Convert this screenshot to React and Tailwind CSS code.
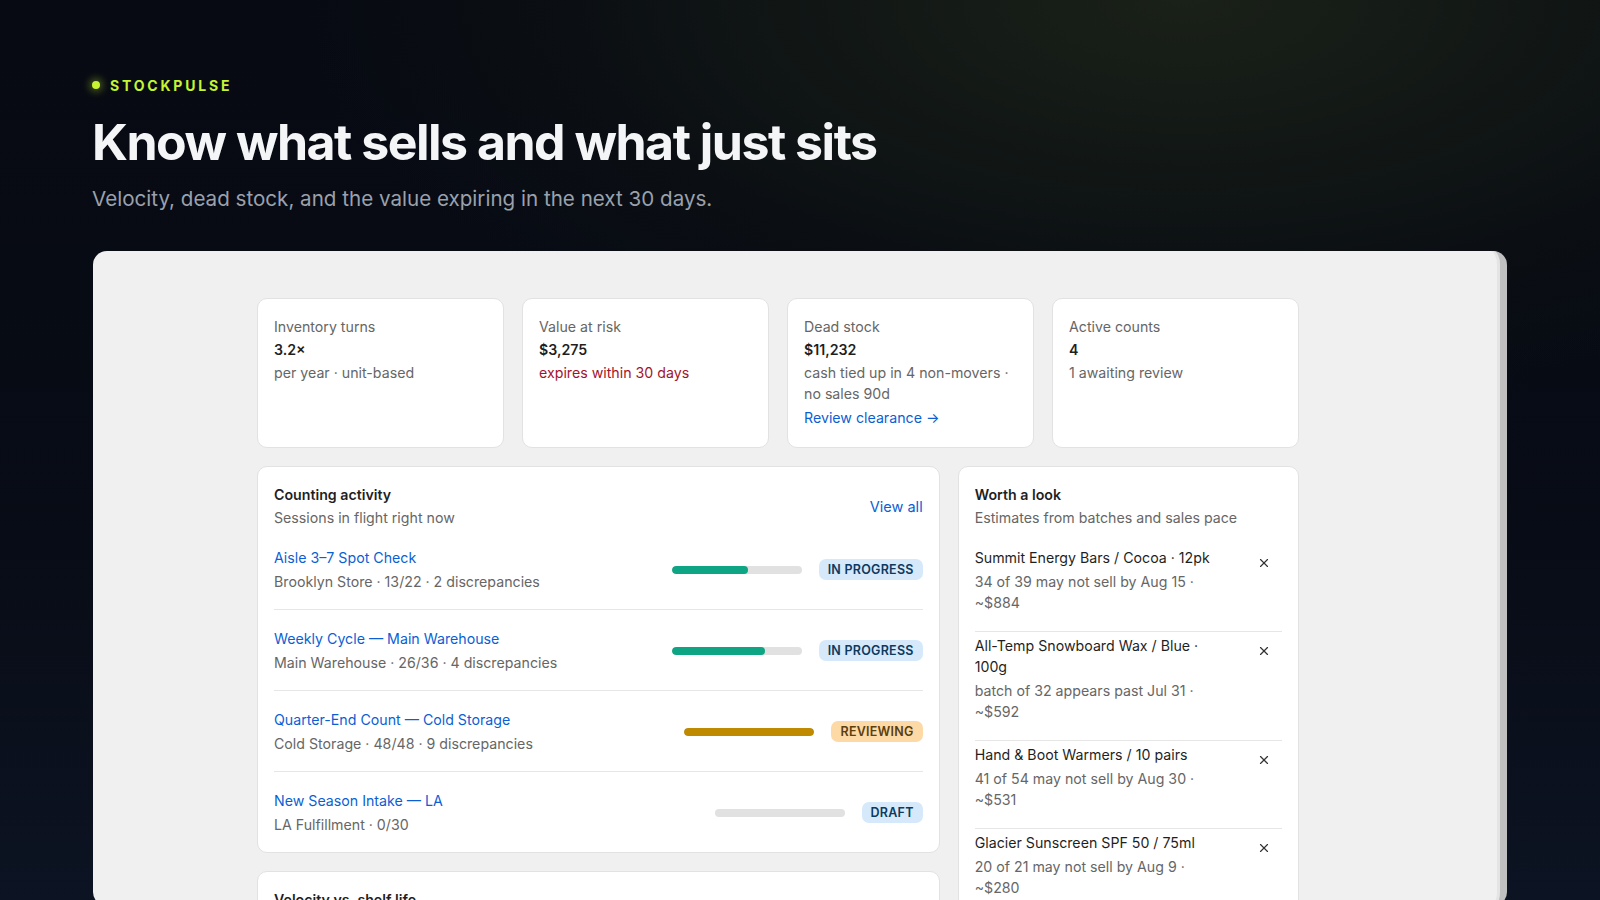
import React from "react";
import { X } from "lucide-react";

const stats = [
  { label: "Inventory turns", value: "3.2×", lines: ["per year · unit-based"] },
  { label: "Value at risk", value: "$3,275", lines: ["expires within 30 days"], danger: true },
  {
    label: "Dead stock",
    value: "$11,232",
    lines: ["cash tied up in 4 non-movers · no sales 90d"],
    link: "Review clearance →",
  },
  { label: "Active counts", value: "4", lines: ["1 awaiting review"] },
];

const sessions = [
  { name: "Aisle 3–7 Spot Check", meta: "Brooklyn Store · 13/22 · 2 discrepancies", pct: 59, status: "In progress" },
  { name: "Weekly Cycle — Main Warehouse", meta: "Main Warehouse · 26/36 · 4 discrepancies", pct: 72, status: "In progress" },
  { name: "Quarter-End Count — Cold Storage", meta: "Cold Storage · 48/48 · 9 discrepancies", pct: 100, status: "Reviewing" },
  { name: "New Season Intake — LA", meta: "LA Fulfillment · 0/30", pct: 0, status: "Draft" },
];

const looks = [
  { title: "Summit Energy Bars / Cocoa · 12pk", note: "34 of 39 may not sell by Aug 15 · ~$884" },
  { title: "All-Temp Snowboard Wax / Blue · 100g", note: "batch of 32 appears past Jul 31 · ~$592" },
  { title: "Hand & Boot Warmers / 10 pairs", note: "41 of 54 may not sell by Aug 30 · ~$531" },
  { title: "Glacier Sunscreen SPF 50 / 75ml", note: "20 of 21 may not sell by Aug 9 · ~$280" },
  { title: "Trail Mix Pouches / Salted · 6pk", note: "18 of 40 may not sell by Sep 2 · ~$144" },
];

const Badge = ({ status }) => {
  const tone =
    status === "Reviewing"
      ? "bg-[#fdd9a6] text-[#5a400f]"
      : "bg-[#d5e9fb] text-[#0d3a5e]";
  return (
    <span className={`h-[21px] px-[9px] flex items-center rounded-[7px] text-[12.5px] font-semibold uppercase tracking-[0.02em] ${tone}`}>
      {status}
    </span>
  );
};

const App = () => {
  return (
    <div
      className="h-screen overflow-hidden bg-[radial-gradient(ellipse_55%_45%_at_74%_0%,#1a2118_0%,#0b0f13_70%,transparent_100%),linear-gradient(180deg,#070a12_0%,#080c16_60%,#0c1322_100%)] px-[93px] pt-[75px]"
      style={{ fontFamily: "Inter, 'Noto Sans', sans-serif" }}
    >
      <div className="flex items-center gap-[10px] h-5 -ml-[1px]">
        <span className="w-2 h-2 rounded-full bg-[#c6f432] shadow-[0_0_8px_2px_rgba(198,244,50,0.45)]" />
        <span className="text-[14px] font-bold tracking-[0.2em] text-[#c6f432]">STOCKPULSE</span>
      </div>
      <h1 className="mt-[19px] text-[50px] leading-[57px] font-bold tracking-[-0.03em] text-[#f4f5f7] -ml-[1px]">
        Know what sells and what just sits
      </h1>
      <p className="mt-[14px] text-[20.6px] leading-[28px] text-[#9aa1ad] -ml-[1px]">
        Velocity, dead stock, and the value expiring in the next 30 days.
      </p>

      <div className="mt-[38px] w-[1414px] h-[655px] bg-[#f0f0f0] rounded-[14px] overflow-hidden border-r-[7px] border-r-[#c0c0c0] shadow-[inset_-3px_0_0_#e4e4e4]">
        <div className="pt-[47px] pl-[164px] pb-12 w-[1206px] text-[14.2px] leading-[21px] text-[#222]">
          <div className="grid grid-cols-4 gap-[18px]">
            {stats.map((s) => (
              <div key={s.label} className="h-[150px] bg-white border border-[#e2e2e2] rounded-[10px] px-4 pt-[17px]">
                <div className="text-[#666]">{s.label}</div>
                <div className="mt-[2px] font-semibold text-[#1f1f1f]">{s.value}</div>
                {s.lines.map((l) => (
                  <div key={l} className={`mt-[2px] ${s.danger ? "text-[#a3132c]" : "text-[#666]"}`}>{l}</div>
                ))}
                {s.link && <div className="mt-[3px] text-[#0b5fd3]">{s.link}</div>}
              </div>
            ))}
          </div>

          <div className="mt-[18px] grid grid-cols-[2fr_1fr] gap-[18px] items-start">
            <div className="flex flex-col gap-[18px]">
              <div className="bg-white border border-[#e2e2e2] rounded-[10px] px-4 pt-[17px]">
                <div className="flex items-center justify-between mb-[1px]">
                  <div>
                    <div className="font-semibold text-[#1f1f1f]">Counting activity</div>
                    <div className="mt-[2px] text-[#666]">Sessions in flight right now</div>
                  </div>
                  <a className="text-[#0b5fd3] text-[14.5px]">View all</a>
                </div>
                {sessions.map((s, i) => (
                  <div
                    key={s.name}
                    className={`flex items-center justify-between pt-[18px] pb-[17px] ${i < sessions.length - 1 ? "border-b border-[#e6e6e6]" : ""}`}
                  >
                    <div>
                      <div className="text-[#0b5fd3]">{s.name}</div>
                      <div className="mt-[3px] text-[#666]">{s.meta}</div>
                    </div>
                    <div className="flex items-center gap-[17px]">
                      <div className="w-[130px] h-2 rounded-full bg-[#e1e1e1] overflow-hidden">
                        <div
                          className={`h-full rounded-full ${s.status === "Reviewing" ? "bg-[#bf8a00]" : "bg-[#0ea584]"}`}
                          style={{ width: `${s.pct}%` }}
                        />
                      </div>
                      <Badge status={s.status} />
                    </div>
                  </div>
                ))}
              </div>

              <div className="bg-white border border-[#e2e2e2] rounded-[10px] px-4 pt-[17px] pb-5">
                <div className="font-semibold text-[#1f1f1f]">Velocity vs. shelf life</div>
                <div className="mt-[2px] text-[#666]">Units sold per week against days left on batch</div>
                <div className="mt-4 h-[180px] rounded-lg bg-[#f7f7f7]" />
              </div>
            </div>

            <div className="bg-white border border-[#e2e2e2] rounded-[10px] px-4 pt-[17px] pb-3">
              <div className="font-semibold text-[#1f1f1f]">Worth a look</div>
              <div className="mt-[2px] text-[#666]">Estimates from batches and sales pace</div>
              <div className="mt-[16px]">
                {looks.map((l, i) => (
                  <div
                    key={l.title}
                    className={`flex items-start justify-between gap-6 pt-[3px] pb-[18px] ${i > 0 ? "border-t border-[#e6e6e6]" : ""}`}
                  >
                    <div className="flex-1">
                      <div className="text-[#1f1f1f]">{l.title}</div>
                      <div className="mt-[3px] text-[#666]">{l.note}</div>
                    </div>
                    <button className="p-[6px] mr-[5px] mt-[3px] text-[#333]">
                      <X size={14} strokeWidth={2} />
                    </button>
                  </div>
                ))}
              </div>
            </div>
          </div>
        </div>
      </div>
    </div>
  );
};

export default App;
